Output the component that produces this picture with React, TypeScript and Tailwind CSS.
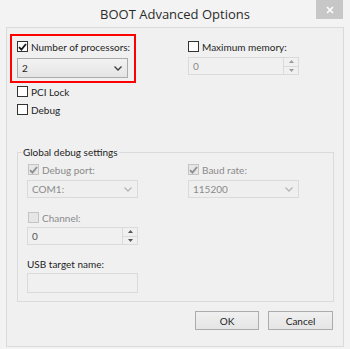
import React from "react";

const font = { fontFamily: 'Lato, "Open Sans", sans-serif' };

const Check = ({
  checked,
  disabled,
}: {
  checked?: boolean;
  disabled?: boolean;
}) => (
  <span
    className={`w-[11px] h-[11px] shrink-0 flex items-center justify-center border ${
      disabled ? "border-[#c4c4c4] bg-[#e6e6e6]" : "border-[#333333] bg-white"
    }`}
  >
    {checked && (
      <svg width="9" height="8" viewBox="0 0 9 8">
        <path
          d="M1 4.2 L3.4 6.6 L8 1"
          fill="none"
          stroke={disabled ? "#8e8e8e" : "#1a1a1a"}
          strokeWidth="1.8"
        />
      </svg>
    )}
  </span>
);

const CheckRow = ({
  label,
  checked,
  disabled,
}: {
  label: string;
  checked?: boolean;
  disabled?: boolean;
}) => (
  <div className="h-[13px] flex items-center gap-[3px] whitespace-nowrap">
    <Check checked={checked} disabled={disabled} />
    <span
      className={`text-[10px] leading-none ${
        disabled ? "text-[#8a8a8a]" : "text-[#1e1e1e]"
      }`}
    >
      {label}
    </span>
  </div>
);

const Chevron = ({ color }: { color: string }) => (
  <svg width="8" height="5" viewBox="0 0 8 5">
    <path d="M0.5 0.5 L4 4 L7.5 0.5" fill="none" stroke={color} strokeWidth="1.3" />
  </svg>
);

const Select = ({
  value,
  disabled,
  h = "h-[18px]",
}: {
  value: string;
  disabled?: boolean;
  h?: string;
}) => (
  <div
    className={`w-[111px] ${h} flex items-center justify-between pl-[4px] pr-[5px] border ${
      disabled
        ? "border-[#dadada] bg-[#efefef] text-[#8a8a8a]"
        : "border-[#acacac] bg-gradient-to-b from-[#f2f2f2] to-[#e5e5e5] text-[#1e1e1e]"
    }`}
  >
    <span className="text-[10px] leading-none">{value}</span>
    <Chevron color={disabled ? "#b5b5b5" : "#3c3c3c"} />
  </div>
);

const Spinner = ({ value, dark }: { value: string; dark?: boolean }) => (
  <div className="w-[111px] h-[18px] flex border border-[#dadada] bg-[#f0f0f0]">
    <span
      className={`flex-1 flex items-center pl-[4px] text-[10px] leading-none ${
        dark ? "text-[#555555]" : "text-[#8a8a8a]"
      }`}
    >
      {value}
    </span>
    <div className="w-[15px] flex flex-col border-l border-[#dadada]">
      <div className="flex-1 flex items-center justify-center border-b border-[#dadada]">
        <svg width="5" height="3" viewBox="0 0 5 3">
          <path d="M0 3 L2.5 0 L5 3 Z" fill={dark ? "#555555" : "#9a9a9a"} />
        </svg>
      </div>
      <div className="flex-1 flex items-center justify-center">
        <svg width="5" height="3" viewBox="0 0 5 3">
          <path d="M0 0 L2.5 3 L5 0 Z" fill={dark ? "#555555" : "#9a9a9a"} />
        </svg>
      </div>
    </div>
  </div>
);

const Button = ({ label, w }: { label: string; w: string }) => (
  <button
    className={`${w} h-[19px] border border-[#acacac] bg-gradient-to-b from-[#f0f0f0] to-[#e5e5e5] text-[10px] leading-none text-[#1e1e1e]`}
  >
    {label}
  </button>
);

export default function App() {
  return (
    <div
      className="w-[350px] h-[349px] bg-[#f3f3f3] flex flex-col select-none"
      style={font}
    >
      {/* title bar */}
      <div className="h-[27px] grid grid-cols-[1fr_auto_1fr] items-start">
        <div />
        <div className="pt-[5px] text-[13px] leading-[18px] text-[#2b2b2b] font-['Open_Sans']">
          BOOT Advanced Options
        </div>
        <div className="flex justify-end pr-[7px]">
          <div className="w-[27px] h-[19px] bg-[#c7c7c7] flex items-center justify-center">
            <svg width="8" height="8" viewBox="0 0 8 8">
              <path d="M1 1 L7 7 M7 1 L1 7" stroke="white" strokeWidth="1.6" />
            </svg>
          </div>
        </div>
      </div>

      {/* client area */}
      <div className="mx-[6px] h-[320px] border border-[#dadada] bg-[#f0f0f0] flex flex-col">
        <div className="flex">
          <div className="ml-[3px] mt-[6px] w-[126px] border-2 border-[#ff0000] pt-[4px] pl-[5px] pr-[6px] pb-[3px] flex flex-col gap-[5px]">
            <CheckRow label="Number of processors:" checked />
            <Select value="2" h="h-[20px]" />
          </div>
          <div className="ml-[52px] pt-[12px] flex flex-col gap-[4px]">
            <CheckRow label="Maximum memory:" />
            <Spinner value="0" />
          </div>
        </div>

        <div className="pl-[10px] mt-[2px] flex flex-col gap-[5px]">
          <CheckRow label="PCI Lock" />
          <CheckRow label="Debug" />
        </div>

        <fieldset className="ml-[10px] mt-[29px] w-[317px] border border-[#dadada]">
          <legend className="ml-[4px] px-[1px] text-[10px] leading-[14px] text-[#1e1e1e]">
            Global debug settings
          </legend>
          <div className="pl-[9px] pt-[4px] pb-[8px] grid grid-cols-[111px_111px] gap-x-[50px]">
            <div className="flex flex-col">
              <div className="pl-[1px]">
                <CheckRow label="Debug port:" checked disabled />
              </div>
              <div className="mt-[4px]">
                <Select value="COM1:" disabled />
              </div>
              <div className="mt-[13px] pl-[1px]">
                <CheckRow label="Channel:" disabled />
              </div>
              <div className="mt-[3px]">
                <Spinner value="0" dark />
              </div>
              <div className="mt-[12px] h-[13px] flex items-center text-[10px] leading-none text-[#1e1e1e]">
                USB target name:
              </div>
              <div className="mt-[3px] w-[111px] h-[20px] border border-[#dadada] bg-[#f0f0f0]" />
            </div>
            <div className="flex flex-col">
              <CheckRow label="Baud rate:" checked disabled />
              <div className="mt-[4px]">
                <Select value="115200" disabled />
              </div>
            </div>
          </div>
        </fieldset>

        <div className="mt-[9px] pr-[10px] flex justify-end gap-[9px]">
          <Button label="OK" w="w-[64px]" />
          <Button label="Cancel" w="w-[65px]" />
        </div>
      </div>
    </div>
  );
}
